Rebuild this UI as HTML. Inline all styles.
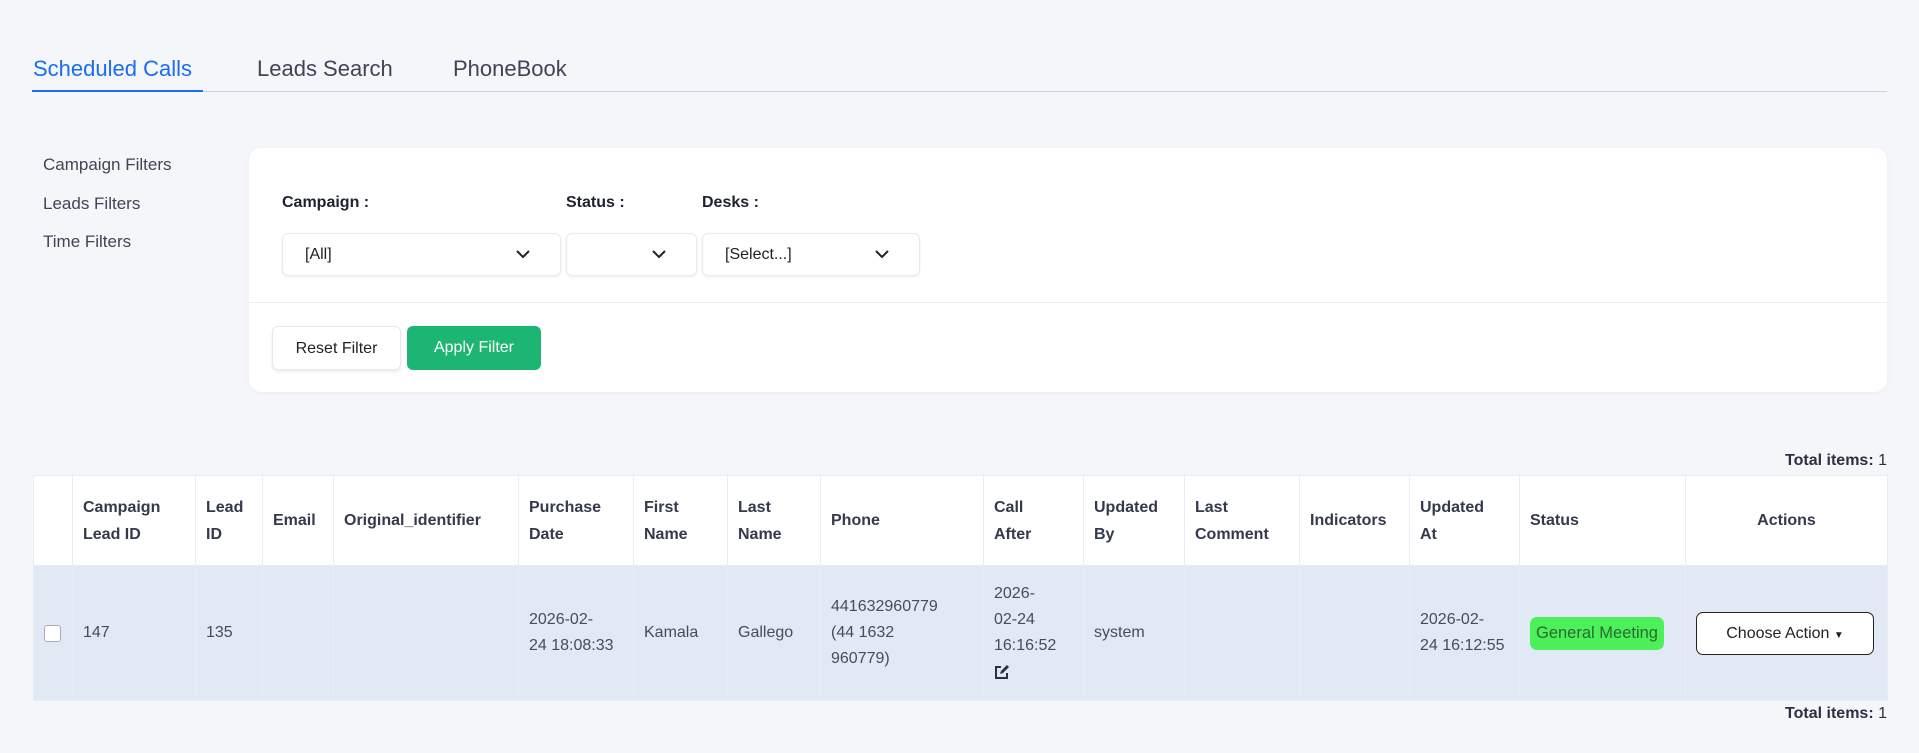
<!DOCTYPE html>
<html><head><meta charset="utf-8"><style>
*{box-sizing:border-box;margin:0;padding:0}
body{width:1919px;height:753px;background:#f4f6fa;font-family:"Liberation Sans",sans-serif;color:#3a4256;position:relative;overflow:hidden}
.a{position:absolute;white-space:nowrap}
.tab{font-size:22px;top:56px;color:#3f4556}
.menu{font-size:17px;left:43px;color:#3f4556}
.card{left:249px;top:148px;width:1638px;height:244px;background:#fff;border-radius:12px;box-shadow:0 1px 4px rgba(0,0,0,.05)}
.lbl{font-size:16px;font-weight:bold;color:#1e2230;top:194px}
.sel{top:233px;height:43px;background:#fff;border:1px solid #e8ebf0;border-radius:6px;box-shadow:0 1px 2px rgba(0,0,0,.08);font-size:16px;color:#222;padding:12px 0 0 22px}
.sel svg{position:absolute;right:30px;top:16px}
.btn{top:326px;height:44px;border-radius:6px;font-size:16px;text-align:center;line-height:44px}
table{position:absolute;left:33px;top:475px;border-collapse:collapse;table-layout:fixed;width:1854px}
th,td{border:1px solid #e9edf3;font-size:16px;text-align:left;padding:0 10px;vertical-align:middle}
th{background:#fff;height:90px;color:#343a4c;line-height:27px;font-weight:bold}
td{background:#e1e9f5;height:135px;line-height:26px;color:#454c5e}
.tot{right:32px;font-size:16px;font-weight:bold;color:#2c3142}
</style></head><body>
<div class="a tab" style="left:33px;color:#1a6cf0">Scheduled Calls</div>
<div class="a tab" style="left:257px">Leads Search</div>
<div class="a tab" style="left:453px">PhoneBook</div>
<div class="a" style="left:32px;top:91px;width:1855px;height:1px;background:#cdd3dc"></div>
<div class="a" style="left:32px;top:90px;width:171px;height:2px;background:#1a6cf0"></div>
<div class="a menu" style="top:155px">Campaign Filters</div>
<div class="a menu" style="top:194px">Leads Filters</div>
<div class="a menu" style="top:232px">Time Filters</div>
<div class="a card"></div>
<div class="a lbl" style="left:282px">Campaign :</div>
<div class="a lbl" style="left:566px">Status :</div>
<div class="a lbl" style="left:702px">Desks :</div>
<div class="a sel" style="left:282px;width:279px">[All]<svg width="14" height="9" viewBox="0 0 14 9"><path d="M1 1l6 6 6-6" fill="none" stroke="#222" stroke-width="2"/></svg></div>
<div class="a sel" style="left:566px;width:131px"><svg width="14" height="9" viewBox="0 0 14 9"><path d="M1 1l6 6 6-6" fill="none" stroke="#222" stroke-width="2"/></svg></div>
<div class="a sel" style="left:702px;width:218px">[Select...]<svg width="14" height="9" viewBox="0 0 14 9"><path d="M1 1l6 6 6-6" fill="none" stroke="#222" stroke-width="2"/></svg></div>
<div class="a" style="left:249px;top:302px;width:1638px;height:1px;background:#eceef2"></div>
<div class="a btn" style="left:272px;width:129px;background:#fff;border:1px solid #e6e9ee;box-shadow:0 2px 3px rgba(0,0,0,.08);color:#222">Reset Filter</div>
<div class="a btn" style="left:407px;width:134px;background:#1db574;color:#fff">Apply Filter</div>
<div class="a tot" style="top:452px">Total items: <span style="font-weight:normal">1</span></div>
<table>
<colgroup><col style="width:39px"><col style="width:123px"><col style="width:67px"><col style="width:71px"><col style="width:185px"><col style="width:115px"><col style="width:94px"><col style="width:93px"><col style="width:163px"><col style="width:100px"><col style="width:101px"><col style="width:115px"><col style="width:110px"><col style="width:110px"><col style="width:166px"><col style="width:202px"></colgroup>
<tr><th></th><th>Campaign<br>Lead ID</th><th>Lead<br>ID</th><th>Email</th><th>Original_identifier</th><th>Purchase<br>Date</th><th>First<br>Name</th><th>Last<br>Name</th><th>Phone</th><th>Call<br>After</th><th>Updated<br>By</th><th>Last<br>Comment</th><th>Indicators</th><th>Updated<br>At</th><th>Status</th><th style="text-align:center">Actions</th></tr>
<tr><td><div style="width:17px;height:17px;border:1px solid #aab;border-radius:3px;background:#fff"></div></td><td>147</td><td>135</td><td></td><td></td><td>2026-02-<br>24 18:08:33</td><td>Kamala</td><td>Gallego</td><td>441632960779<br>(44 1632<br>960779)</td><td>2026-<br>02-24<br>16:16:52<br><svg width="16" height="16" viewBox="0 0 16 16" style="vertical-align:middle"><path d="M7 3H2v11h11V9" fill="none" stroke="#2c3142" stroke-width="2"/><path d="M6 10l1-3 6-6 2 2-6 6z" fill="#2c3142"/></svg></td><td>system</td><td></td><td></td><td>2026-02-<br>24 16:12:55</td><td><span style="display:inline-block;background:#4cf05a;color:#2a6a30;border-radius:7px;padding:0 6px;line-height:33px;font-size:16.5px">General Meeting</span></td><td style="padding-left:10px"><div style="width:178px;height:43px;border:1px solid #222;border-radius:7px;background:#fff;color:#222;text-align:center;line-height:41px;font-size:16px">Choose Action <span style="font-size:10px">▼</span></div></td></tr>
</table>
<div class="a tot" style="top:705px">Total items: <span style="font-weight:normal">1</span></div>
</body></html>
